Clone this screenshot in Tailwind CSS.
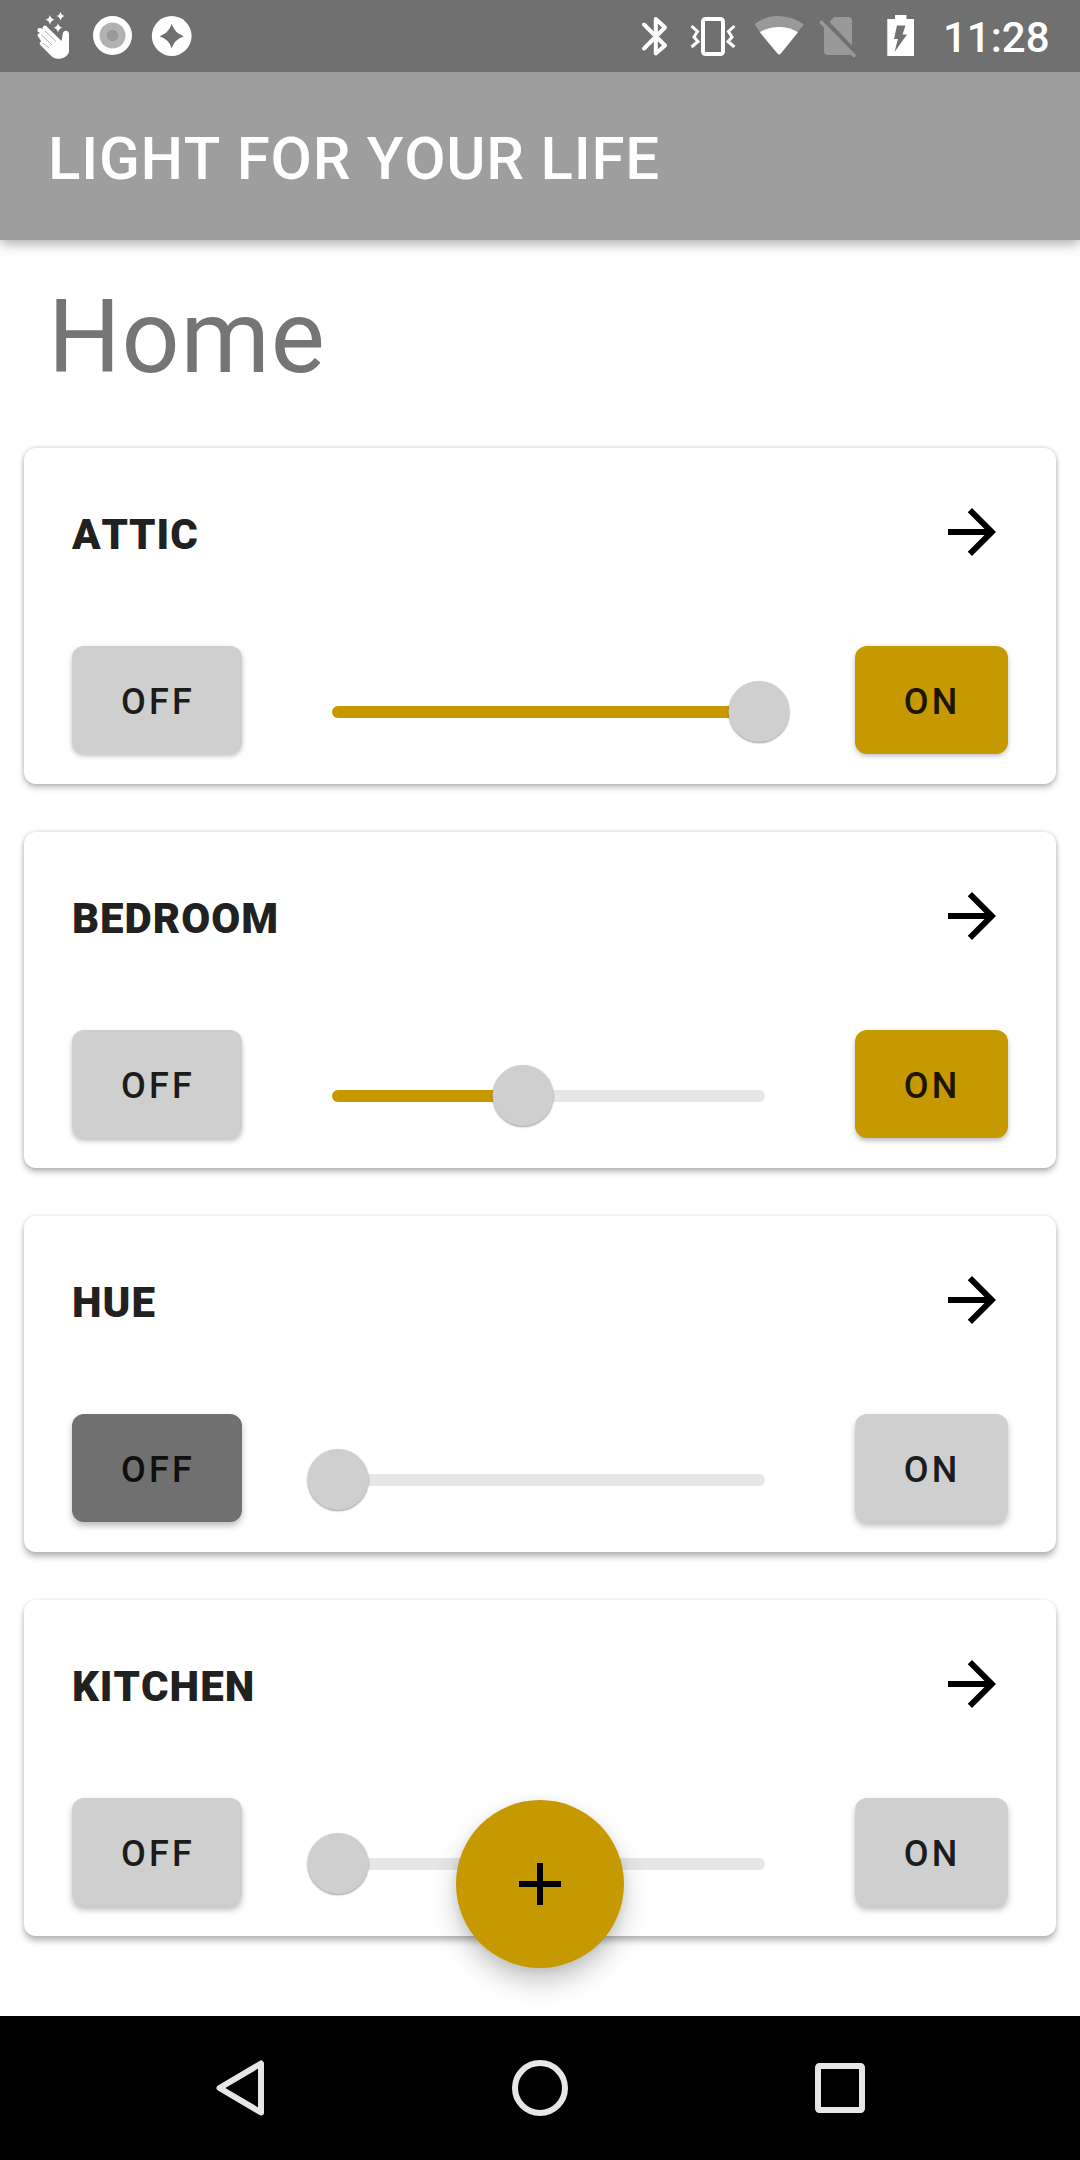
<!DOCTYPE html>
<html lang="en">
<head>
<meta charset="utf-8">
<title>Light for your life</title>
<script src="https://cdn.jsdelivr.net/npm/@tailwindcss/browser@4"></script>
</head>
<body class="bg-white">
<div class="relative flex h-[2160px] w-[1080px] flex-col overflow-hidden bg-white font-['Roboto',sans-serif]">

  <!-- Status bar -->
  <div class="relative z-10 flex h-[72px] shrink-0 items-center justify-between bg-[#707070] pr-[30px]">
    <svg class="h-[72px] w-[360px]" viewBox="0 0 360 72" fill="#fff">
      <path d="M50 15q1 4 4.500 4.500q-3.500 1-4.500 5q-1-4-4.500-5q3.500-.5 4.500-4.500zM60.500 12q1 3.500 4 4q-3 .8-4 4.500q-1-3.700-4-4.500q3-.5 4-4zM58 23.500q1 3.500 4.500 4.200q-3.500 .8-4.500 4.500q-1-3.700-4.500-4.500q3.500-.7 4.500-4.200z"/>
      <path d="M38.300 36.800a2 2 0 0 1 1.600-3.500l-.3-.8a2.200 2.200 0 0 1 0-4.500c1.500-.2 2.600.8 3.400 1.600a2.200 2.200 0 0 1 3.700-3L61.500 41l1.300-7.500c.6-3.600 5.800-4 6.200.5V51c0 4-5 7.800-11.500 7.800c-2.500 0-4.500-1-6.500-3L40.500 45.300c-1.500-1.600-1-3.500.8-3.800z"/>
      <path d="M41 34.500l11 10.500M45 31l11 10.500M43 43l6 5" fill="none" stroke="#999" stroke-width=".8"/>
      <circle cx="112.500" cy="35.500" r="19.500"/>
      <circle cx="112.500" cy="35.500" r="13" fill="#b2b2b2"/>
      <circle cx="112.500" cy="35.500" r="5.800" fill="#999"/>
      <circle cx="171.700" cy="36" r="19.900"/>
      <path d="M171.700 24q3 9 12 12.200q-9 3-12 12q-3-9-12-12q9-3.200 12-12.200z" fill="#707070"/>
    </svg>
    <div class="flex items-center">
      <svg class="h-[72px] w-[323px]" viewBox="620 0 323 72" fill="none">
        <path d="M644 24.500L665 45.500L655.800 53.500V19L665 27.500L644 48.500" stroke="#fff" stroke-width="4" stroke-linejoin="round" stroke-linecap="round"/>
        <rect x="703" y="19" width="20" height="35" rx="2.500" stroke="#fff" stroke-width="4"/>
        <path d="M691.500 26l6 5.500l-3.500 5.500l4 4.500l-6.500 5.500M734.500 26l-6 5.500l3.500 5.500l-4 4.500l6.500 5.500" stroke="#fff" stroke-width="3"/>
        <path d="M755.300 25.500q-1-1 .5-2.300c13-9.600 30.500-9.600 46.500 0q1.600 1.300 .6 2.500L797.500 32H760z" fill="#999"/>
        <path d="M759.800 32.300c12-7.200 26.500-7.200 38.200 0L780.700 53.800q-1.400 1.500-3 0z" fill="#fff"/>
        <path d="M834 17h14q4 0 4 4v24.500L829.500 22zM824 27l28 28h-24q-4 0-4-4z" fill="#999"/>
        <path d="M821.500 22.500L854 55.500" stroke="#999" stroke-width="3.600" stroke-linecap="round"/>
        <path d="M895 15h11.500v4H914v37h-26.700V19h7.700z" fill="#fff"/>
        <path d="M897 25.500h8.500l-3 9h4.500L894.500 52l3.500-13h-4z" fill="#707070"/>
      </svg>
      <span class="w-[107px] pt-[3px] text-[42px] leading-[48px] font-medium text-white">11:28</span>
    </div>
  </div>

  <!-- App bar -->
  <header class="relative flex h-[168px] shrink-0 items-center bg-[#9e9e9e] px-12 pt-[5px] shadow-[0_4px_12px_rgba(0,0,0,0.32)]">
    <h1 class="text-[60px] leading-[72px] font-medium tracking-[0.75px] text-white [font-kerning:none]">LIGHT FOR YOUR LIFE</h1>
  </header>

  <main class="flex flex-1 flex-col px-6 pt-[37px]">
    <h2 class="mb-[51px] px-6 text-[102px] leading-[120px] tracking-[0.75px] text-[#757575]">Home</h2>

    <div class="flex flex-col gap-12">
      <section class="h-[336px] rounded-xl bg-white px-12 pt-12 shadow-[0_4px_6px_rgba(0,0,0,0.22),0_0_4px_rgba(0,0,0,0.2)]">
        <div class="flex h-[72px] items-center justify-between">
          <h3 class="pt-[5px] text-[42px] leading-[48px] font-black tracking-[1px] text-[#212121] [font-kerning:none]">ATTIC</h3>
          <svg class="size-[72px]" viewBox="0 0 24 24"><path d="M12 4l-1.410 1.410L16.170 11H4v2h12.170l-5.580 5.590L12 20l8-8z"/></svg>
        </div>
        <div class="mt-[78px] flex h-[108px] gap-[90px]">
          <button class="w-[170px] rounded-xl bg-[#cfcfcf] pt-[3px] pl-[2px] text-[36px] font-medium tracking-[3.2px] text-[#1c1c1c] shadow-[0_2px_5px_rgba(0,0,0,0.25)]">OFF</button>
          <div class="relative mt-[60px] h-3 w-[433px] rounded-full bg-[#e7e7e7]">
            <div class="h-3 rounded-full bg-[#c69900]" style="width:427px"></div>
            <div class="absolute top-[-25px] size-[61px] -translate-x-1/2 rounded-full bg-[#cfcfcf] shadow-[0_1px_2px_rgba(0,0,0,0.4)]" style="left:427px"></div>
          </div>
          <button class="w-[153px] rounded-xl bg-[#c69900] pt-[3px] pl-[1px] text-[36px] font-medium tracking-[3.2px] text-[#1c1600] shadow-[0_2px_5px_rgba(0,0,0,0.25)]">ON</button>
        </div>
      </section>

      <section class="h-[336px] rounded-xl bg-white px-12 pt-12 shadow-[0_4px_6px_rgba(0,0,0,0.26),0_0_4px_rgba(0,0,0,0.16)]">
        <div class="flex h-[72px] items-center justify-between">
          <h3 class="pt-[5px] text-[42px] leading-[48px] font-black tracking-[1px] text-[#212121] [font-kerning:none]">BEDROOM</h3>
          <svg class="size-[72px]" viewBox="0 0 24 24"><path d="M12 4l-1.410 1.410L16.170 11H4v2h12.170l-5.580 5.590L12 20l8-8z"/></svg>
        </div>
        <div class="mt-[78px] flex h-[108px] gap-[90px]">
          <button class="w-[170px] rounded-xl bg-[#cfcfcf] pt-[3px] pl-[2px] text-[36px] font-medium tracking-[3.2px] text-[#1c1c1c] shadow-[0_3px_5px_rgba(0,0,0,0.25)]">OFF</button>
          <div class="relative mt-[60px] h-3 w-[433px] rounded-full bg-[#e7e7e7]">
            <div class="h-3 rounded-full bg-[#c69900]" style="width:191px"></div>
            <div class="absolute top-[-25px] size-[61px] -translate-x-1/2 rounded-full bg-[#cfcfcf] shadow-[0_1px_2px_rgba(0,0,0,0.4)]" style="left:191px"></div>
          </div>
          <button class="w-[153px] rounded-xl bg-[#c69900] pt-[3px] pl-[1px] text-[36px] font-medium tracking-[3.2px] text-[#1c1600] shadow-[0_3px_5px_rgba(0,0,0,0.25)]">ON</button>
        </div>
      </section>

      <section class="h-[336px] rounded-xl bg-white px-12 pt-12 shadow-[0_5px_6px_rgba(0,0,0,0.26),0_0_4px_rgba(0,0,0,0.12)]">
        <div class="flex h-[72px] items-center justify-between">
          <h3 class="pt-[5px] text-[42px] leading-[48px] font-black tracking-[1px] text-[#212121] [font-kerning:none]">HUE</h3>
          <svg class="size-[72px]" viewBox="0 0 24 24"><path d="M12 4l-1.410 1.410L16.170 11H4v2h12.170l-5.580 5.590L12 20l8-8z"/></svg>
        </div>
        <div class="mt-[78px] flex h-[108px] gap-[90px]">
          <button class="w-[170px] rounded-xl bg-[#707070] pt-[3px] pl-[2px] text-[36px] font-medium tracking-[3.2px] text-[#0f0f0f] shadow-[0_4px_6px_rgba(0,0,0,0.25)]">OFF</button>
          <div class="relative mt-[60px] h-3 w-[433px] rounded-full bg-[#e7e7e7]">
            <div class="absolute top-[-25px] size-[61px] -translate-x-1/2 rounded-full bg-[#cfcfcf] shadow-[0_1px_2px_rgba(0,0,0,0.4)]" style="left:6px"></div>
          </div>
          <button class="w-[153px] rounded-xl bg-[#cfcfcf] pt-[3px] pl-[1px] text-[36px] font-medium tracking-[3.2px] text-[#1c1c1c] shadow-[0_4px_6px_rgba(0,0,0,0.25)]">ON</button>
        </div>
      </section>

      <section class="h-[336px] rounded-xl bg-white px-12 pt-12 shadow-[0_5px_6px_rgba(0,0,0,0.26),0_0_4px_rgba(0,0,0,0.1)]">
        <div class="flex h-[72px] items-center justify-between">
          <h3 class="pt-[5px] text-[42px] leading-[48px] font-black tracking-[1px] text-[#212121] [font-kerning:none]">KITCHEN</h3>
          <svg class="size-[72px]" viewBox="0 0 24 24"><path d="M12 4l-1.410 1.410L16.170 11H4v2h12.170l-5.580 5.590L12 20l8-8z"/></svg>
        </div>
        <div class="mt-[78px] flex h-[108px] gap-[90px]">
          <button class="w-[170px] rounded-xl bg-[#cfcfcf] pt-[3px] pl-[2px] text-[36px] font-medium tracking-[3.2px] text-[#1c1c1c] shadow-[0_4px_6px_rgba(0,0,0,0.25)]">OFF</button>
          <div class="relative mt-[60px] h-3 w-[433px] rounded-full bg-[#e7e7e7]">
            <div class="absolute top-[-25px] size-[61px] -translate-x-1/2 rounded-full bg-[#cfcfcf] shadow-[0_1px_2px_rgba(0,0,0,0.4)]" style="left:6px"></div>
          </div>
          <button class="w-[153px] rounded-xl bg-[#cfcfcf] pt-[3px] pl-[1px] text-[36px] font-medium tracking-[3.2px] text-[#1c1c1c] shadow-[0_4px_6px_rgba(0,0,0,0.25)]">ON</button>
        </div>
      </section>
    </div>
  </main>

  <!-- Floating action button -->
  <button class="absolute bottom-48 left-1/2 flex size-[168px] -translate-x-1/2 items-center justify-center rounded-full bg-[#c69900] shadow-[0_14px_26px_rgba(0,0,0,0.22),0_2px_10px_rgba(0,0,0,0.08)]">
    <svg class="size-[72px]" viewBox="0 0 24 24"><path d="M19 13h-6v6h-2v-6H5v-2h6V5h2v6h6z"/></svg>
  </button>

  <!-- System navigation -->
  <nav class="relative flex h-36 shrink-0 items-center justify-center gap-[228px] bg-black">
    <svg class="size-[72px]" viewBox="0 0 72 72" fill="none" stroke="#e6e6e6" stroke-width="6" stroke-linejoin="round"><path d="M57 11.500V60.500L15.500 36Z"/></svg>
    <svg class="size-[72px]" viewBox="0 0 72 72" fill="none" stroke="#e6e6e6" stroke-width="6"><circle cx="36" cy="36" r="25"/></svg>
    <svg class="size-[72px]" viewBox="0 0 72 72" fill="none" stroke="#e6e6e6" stroke-width="6"><rect x="14" y="14" width="44" height="44" rx="1.500"/></svg>
  </nav>
</div>
</body>
</html>
